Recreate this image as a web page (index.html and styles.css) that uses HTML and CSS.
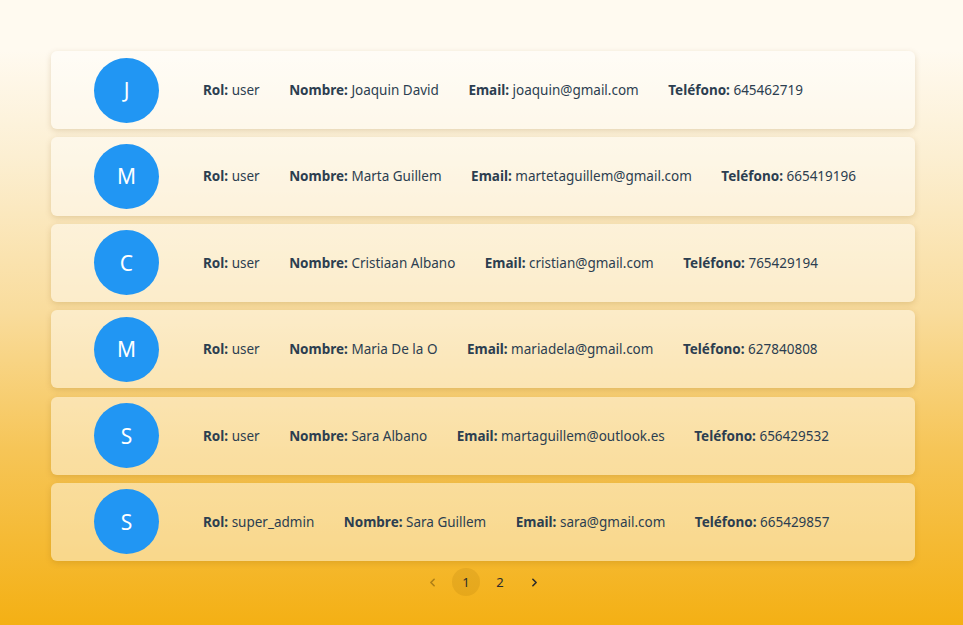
FILE: index.html
```html
<!DOCTYPE html>
<html lang="es">
<head>
<meta charset="utf-8">
<link rel="stylesheet" href="styles.css">
</head>
<body>
<main class="page">
  <ul class="list">
    <li class="card">
      <div class="avatar">J</div>
      <div class="info">
        <span><b>Rol:</b> user</span>
        <span><b>Nombre:</b> Joaquin David</span>
        <span><b>Email:</b> joaquin@gmail.com</span>
        <span><b>Teléfono:</b> 645462719</span>
      </div>
    </li>
    <li class="card">
      <div class="avatar">M</div>
      <div class="info">
        <span><b>Rol:</b> user</span>
        <span><b>Nombre:</b> Marta Guillem</span>
        <span><b>Email:</b> martetaguillem@gmail.com</span>
        <span><b>Teléfono:</b> 665419196</span>
      </div>
    </li>
    <li class="card">
      <div class="avatar">C</div>
      <div class="info">
        <span><b>Rol:</b> user</span>
        <span><b>Nombre:</b> Cristiaan Albano</span>
        <span><b>Email:</b> cristian@gmail.com</span>
        <span><b>Teléfono:</b> 765429194</span>
      </div>
    </li>
    <li class="card">
      <div class="avatar">M</div>
      <div class="info">
        <span><b>Rol:</b> user</span>
        <span><b>Nombre:</b> Maria De la O</span>
        <span><b>Email:</b> mariadela@gmail.com</span>
        <span><b>Teléfono:</b> 627840808</span>
      </div>
    </li>
    <li class="card">
      <div class="avatar">S</div>
      <div class="info">
        <span><b>Rol:</b> user</span>
        <span><b>Nombre:</b> Sara Albano</span>
        <span><b>Email:</b> martaguillem@outlook.es</span>
        <span><b>Teléfono:</b> 656429532</span>
      </div>
    </li>
    <li class="card">
      <div class="avatar">S</div>
      <div class="info">
        <span><b>Rol:</b> super_admin</span>
        <span><b>Nombre:</b> Sara Guillem</span>
        <span><b>Email:</b> sara@gmail.com</span>
        <span><b>Teléfono:</b> 665429857</span>
      </div>
    </li>
  </ul>
  <nav class="pager">
    <button class="pg-btn pg-arrow disabled" aria-label="Anterior">
      <svg width="13" height="13" viewBox="0 0 24 24"><path d="M15 6l-6 6 6 6" fill="none" stroke="currentColor" stroke-width="3" stroke-linecap="round" stroke-linejoin="round"/></svg>
    </button>
    <button class="pg-btn active">1</button>
    <button class="pg-btn">2</button>
    <button class="pg-btn pg-arrow" aria-label="Siguiente">
      <svg width="13" height="13" viewBox="0 0 24 24"><path d="M9 6l6 6-6 6" fill="none" stroke="currentColor" stroke-width="3" stroke-linecap="round" stroke-linejoin="round"/></svg>
    </button>
  </nav>
</main>
</body>
</html>
```

FILE: styles.css
```css
* { box-sizing: border-box; }
html, body { margin: 0; padding: 0; height: 100%; }
body {
  font-family: "Noto Sans", "Open Sans", sans-serif;
  color: #2c3e50;
  background: linear-gradient(to bottom, #fffaf0 8%, #fcefd2 25%, #f9dc9c 50%, #f6c557 72%, #f4b014 100%);
  min-height: 625px;
}
.page {
  padding: 51px 48px 0 51px;
}
.list {
  list-style: none;
  margin: 0;
  padding: 0;
  display: flex;
  flex-direction: column;
  gap: 8.2px;
}
.card {
  display: flex;
  align-items: center;
  height: 78.2px;
  padding: 0 0 0 43px;
  background: rgba(255, 255, 255, 0.45);
  border-radius: 6px;
  box-shadow: 0 2px 6px rgba(120, 80, 0, 0.18);
}
.avatar {
  width: 65px;
  height: 65px;
  border-radius: 50%;
  background: #2196f3;
  color: #fff;
  font-size: 21px;
  display: flex;
  align-items: center;
  justify-content: center;
  flex: none;
}
.info {
  display: flex;
  gap: 29.5px;
  margin-left: 44px;
  font-size: 13.5px;
  white-space: nowrap;
}
.info b { font-weight: 700; }
.pager {
  display: flex;
  justify-content: center;
  align-items: center;
  gap: 6px;
  margin-top: 7px;
}
.pg-btn {
  width: 28px;
  height: 28px;
  border: 0;
  border-radius: 50%;
  background: transparent;
  font-family: inherit;
  font-size: 13px;
  color: #2c2c2c;
  display: flex;
  align-items: center;
  justify-content: center;
  padding: 0;
}
.pg-btn.active { background: rgba(150, 100, 0, 0.14); }
.pg-arrow.disabled { color: rgba(60, 40, 0, 0.38); }
```
